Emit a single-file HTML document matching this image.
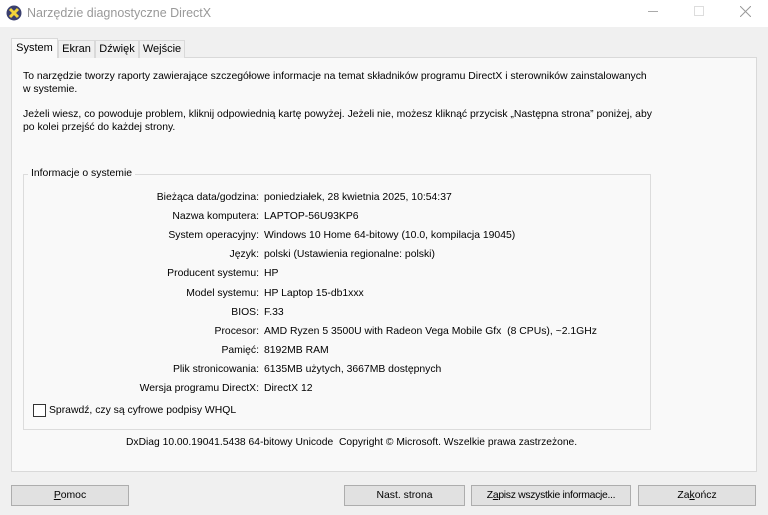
<!DOCTYPE html>
<html><head><meta charset="utf-8"><style>
*{margin:0;padding:0;box-sizing:border-box}
body{width:768px;height:515px;background:#f0f0f0;font-family:"Liberation Sans",sans-serif;font-size:10.4px;color:#000;position:relative;overflow:hidden}
.abs{position:absolute;white-space:nowrap}
.title{position:absolute;left:0;top:0;width:768px;height:27px;background:#fff}
.tab{position:absolute;top:40px;height:18px;border:1px solid #d9d9d9;border-bottom:none;background:#f0f0f0;text-align:center;line-height:16px;font-size:11px}
.page{position:absolute;left:11px;top:57px;width:746px;height:415px;background:#f9f9f9;border:1px solid #d9d9d9}
.grp{position:absolute;left:23px;top:174px;width:628px;height:256px;border:1px solid #dcdcdc}
.lbl{position:absolute;right:509px;white-space:nowrap;text-align:right}
.val{position:absolute;left:264px;white-space:nowrap}
.btn{position:absolute;top:485px;height:21px;background:#e1e1e1;border:1px solid #adadad;text-align:center;line-height:19px;font-size:10.4px}
</style></head><body>
<div class="title"></div>
<svg class="abs" style="left:6px;top:5px" width="16" height="16" viewBox="0 0 16 16"><circle cx="8" cy="8" r="7.5" fill="#3a3f6e"/><path d="M4 4L12 12M12 4L4 12" stroke="#f2d23a" stroke-width="3"/></svg>
<div class="abs" style="left:27px;top:6px;font-size:12.5px;color:#999">Narzędzie diagnostyczne DirectX</div>
<div class="abs" style="left:648px;top:11px;width:10px;height:1px;background:#aaa"></div>
<div class="abs" style="left:694px;top:6px;width:10px;height:10px;border:1px solid #ddd"></div>
<svg class="abs" style="left:740px;top:6px" width="11" height="11"><path d="M0 0L11 11M11 0L0 11" stroke="#999" stroke-width="1"/></svg>
<div class="page"></div>
<div class="tab" style="left:58px;width:37px">Ekran</div>
<div class="tab" style="left:95px;width:44px">Dźwięk</div>
<div class="tab" style="left:139px;width:46px">Wejście</div>
<div class="tab" style="left:11px;top:38px;height:20px;width:47px;background:#f9f9f9;line-height:18px">System</div>
<div class="abs" style="left:23px;top:70px;line-height:13px">To narzędzie tworzy raporty zawierające szczegółowe informacje na temat składników programu DirectX i sterowników zainstalowanych<br>w systemie.</div>
<div class="abs" style="left:23px;top:108px;line-height:13px">Jeżeli wiesz, co powoduje problem, kliknij odpowiednią kartę powyżej. Jeżeli nie, możesz kliknąć przycisk „Następna strona” poniżej, aby<br>po kolei przejść do każdej strony.</div>
<div class="grp"></div>
<div class="abs" style="left:28px;top:168px;background:#f9f9f9;padding:0 3px">Informacje o systemie</div>
<div class="lbl" style="top:192px">Bieżąca data/godzina:</div><div class="val" style="top:192px">poniedziałek, 28 kwietnia 2025, 10:54:37</div>
<div class="lbl" style="top:211px">Nazwa komputera:</div><div class="val" style="top:211px">LAPTOP-56U93KP6</div>
<div class="lbl" style="top:230px">System operacyjny:</div><div class="val" style="top:230px">Windows 10 Home 64-bitowy (10.0, kompilacja 19045)</div>
<div class="lbl" style="top:249px">Język:</div><div class="val" style="top:249px">polski (Ustawienia regionalne: polski)</div>
<div class="lbl" style="top:268px">Producent systemu:</div><div class="val" style="top:268px">HP</div>
<div class="lbl" style="top:288px">Model systemu:</div><div class="val" style="top:288px">HP Laptop 15-db1xxx</div>
<div class="lbl" style="top:307px">BIOS:</div><div class="val" style="top:307px">F.33</div>
<div class="lbl" style="top:326px">Procesor:</div><div class="val" style="top:326px">AMD Ryzen 5 3500U with Radeon Vega Mobile Gfx &nbsp;(8 CPUs), ~2.1GHz</div>
<div class="lbl" style="top:345px">Pamięć:</div><div class="val" style="top:345px">8192MB RAM</div>
<div class="lbl" style="top:364px">Plik stronicowania:</div><div class="val" style="top:364px">6135MB użytych, 3667MB dostępnych</div>
<div class="lbl" style="top:383px">Wersja programu DirectX:</div><div class="val" style="top:383px">DirectX 12</div>
<div class="abs" style="left:33px;top:404px;width:13px;height:13px;border:1px solid #333;background:#fff"></div>
<div class="abs" style="left:49px;top:405px">Sprawdź, czy są cyfrowe podpisy WHQL</div>
<div class="abs" style="left:126px;top:437px;font-size:10.3px">DxDiag 10.00.19041.5438 64-bitowy Unicode &nbsp;Copyright © Microsoft. Wszelkie prawa zastrzeżone.</div>
<div class="btn" style="left:11px;width:118px"><u>P</u>omoc</div>
<div class="btn" style="left:344px;width:121px">Nast. strona</div>
<div class="btn" style="left:471px;width:160px;letter-spacing:-0.3px">Z<u>a</u>pisz wszystkie informacje...</div>
<div class="btn" style="left:638px;width:118px">Za<u>k</u>ończ</div>
</body></html>
